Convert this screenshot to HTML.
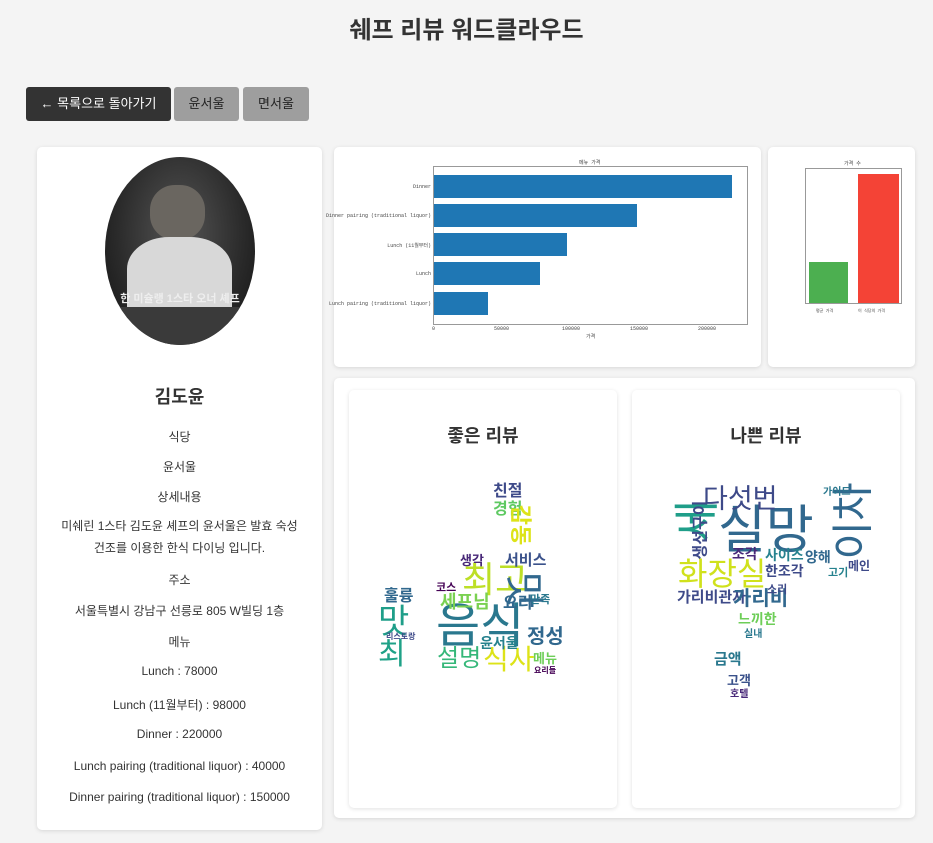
<!DOCTYPE html>
<html><head><meta charset="utf-8">
<style>
*{box-sizing:border-box;margin:0;padding:0}
body{width:933px;height:843px;background:#f4f4f4;font-family:"Liberation Sans","Noto Sans CJK KR",sans-serif;color:#333;position:relative;overflow:hidden}
h1{position:absolute;top:10px;left:0;width:933px;text-align:center;font-size:24px;font-weight:bold;color:#333}
.btn{position:absolute;top:87px;height:34px;line-height:34px;font-size:13px;border-radius:3px;text-align:center}
.card{position:absolute;background:#fff;border-radius:5px;box-shadow:0 1px 4px rgba(0,0,0,.12)}
.info p{position:absolute;left:0;width:285px;text-align:center;font-size:12px;color:#333}
.w{position:absolute;white-space:nowrap;font-weight:bold;line-height:1}
.ax{font-family:"Liberation Mono",monospace;font-size:5px;color:#444;position:absolute;white-space:nowrap}
</style></head><body>
<h1>쉐프 리뷰 워드클라우드</h1>
<div class="btn" style="left:26px;width:145px;background:#333;color:#fff">← 목록으로 돌아가기</div>
<div class="btn" style="left:174px;width:65px;background:#9e9e9e;color:#222">윤서울</div>
<div class="btn" style="left:243px;width:66px;background:#9e9e9e;color:#222">면서울</div>

<div class="card info" style="left:37px;top:147px;width:285px;height:683px">
 <div style="position:absolute;left:68px;top:10px;width:150px;height:188px;border-radius:50%;background:radial-gradient(ellipse at 50% 40%,#555 0%,#2a2a2a 60%,#111 100%);overflow:hidden">
  <div style="position:absolute;left:45px;top:28px;width:55px;height:55px;border-radius:45%;background:#6a6660"></div>
  <div style="position:absolute;left:22px;top:80px;width:105px;height:80px;border-radius:40% 40% 10% 10%;background:#d8d8d8"></div>
  <div style="position:absolute;left:0;top:133px;width:150px;text-align:center;color:#eee;font-size:11px;font-weight:bold">한 미슐랭 1스타 오너 셰프</div>
  <div style="position:absolute;left:0;top:150px;width:150px;height:38px;background:#3a3a3a"></div>
 </div>
 <p style="top:236px;font-size:18px;font-weight:bold">김도윤</p>
 <p style="top:281px">식당</p>
 <p style="top:311px">윤서울</p>
 <p style="top:341px">상세내용</p>
 <p style="top:368px;line-height:22px;padding:0 14px">미쉐린 1스타 김도윤 셰프의 윤서울은 발효 숙성<br>건조를 이용한 한식 다이닝 입니다.</p>
 <p style="top:424px">주소</p>
 <p style="top:455px">서울특별시 강남구 선릉로 805 W빌딩 1층</p>
 <p style="top:486px">메뉴</p>
 <p style="top:517px">Lunch : 78000</p>
 <p style="top:549px">Lunch (11월부터) : 98000</p>
 <p style="top:580px">Dinner : 220000</p>
 <p style="top:612px">Lunch pairing (traditional liquor) : 40000</p>
 <p style="top:643px">Dinner pairing (traditional liquor) : 150000</p>
</div>

<div class="card" style="left:334px;top:147px;width:427px;height:220px">
 <div class="ax" style="left:245px;top:12px">메뉴 가격</div>
 <div style="position:absolute;left:99px;top:19px;width:315px;height:159px;border:1px solid #999">
  <div style="position:absolute;left:0;top:8px;width:298px;height:23px;background:#1f77b4"></div>
  <div style="position:absolute;left:0;top:37px;width:203px;height:23px;background:#1f77b4"></div>
  <div style="position:absolute;left:0;top:66px;width:133px;height:23px;background:#1f77b4"></div>
  <div style="position:absolute;left:0;top:95px;width:106px;height:23px;background:#1f77b4"></div>
  <div style="position:absolute;left:0;top:125px;width:54px;height:23px;background:#1f77b4"></div>
 </div>
 <div class="ax" style="right:330px;top:37px">Dinner</div>
 <div class="ax" style="right:330px;top:66px">Dinner pairing (traditional liquor)</div>
 <div class="ax" style="right:330px;top:95px">Lunch (11월부터)</div>
 <div class="ax" style="right:330px;top:124px">Lunch</div>
 <div class="ax" style="right:330px;top:154px">Lunch pairing (traditional liquor)</div>
 <div class="ax" style="left:98px;top:179px">0</div>
 <div class="ax" style="left:160px;top:179px">50000</div>
 <div class="ax" style="left:228px;top:179px">100000</div>
 <div class="ax" style="left:296px;top:179px">150000</div>
 <div class="ax" style="left:364px;top:179px">200000</div>
 <div class="ax" style="left:252px;top:186px">가격</div>
</div>

<div class="card" style="left:768px;top:147px;width:147px;height:220px">
 <div class="ax" style="left:76px;top:13px">가격 수</div>
 <div style="position:absolute;left:37px;top:21px;width:97px;height:136px;border:1px solid #999">
  <div style="position:absolute;left:3px;bottom:0;width:39px;height:41px;background:#4caf50"></div>
  <div style="position:absolute;left:52px;bottom:0;width:41px;height:129px;background:#f44336"></div>
 </div>
 <div class="ax" style="left:48px;top:161px;font-size:4px">평균 가격</div>
 <div class="ax" style="left:90px;top:161px;font-size:4px">이 식당의 가격</div>
</div>

<div class="card" style="left:334px;top:378px;width:581px;height:440px"></div>
<div class="card" style="left:349px;top:390px;width:268px;height:418px">
 <div style="position:absolute;top:32px;width:268px;text-align:center;font-size:18px;font-weight:bold">좋은 리뷰</div>
</div>
<div class="card" style="left:632px;top:390px;width:268px;height:418px">
 <div style="position:absolute;top:32px;width:268px;text-align:center;font-size:18px;font-weight:bold">나쁜 리뷰</div>
</div>

<!-- good cloud -->
<div class="w" style="left:436px;top:603px;font-size:48px;color:#2a788e;font-weight:normal">음식</div>
<div class="w" style="left:462px;top:562px;font-size:36px;color:#bddf26;font-weight:normal">최고</div>
<div class="w" style="left:505px;top:570px;font-size:40px;color:#31688e;transform:rotate(90deg);font-weight:normal">맛</div>
<div class="w" style="left:483px;top:646px;font-size:28px;color:#dde318;font-weight:normal">식사</div>
<div class="w" style="left:437px;top:647px;font-size:24px;color:#35b779;font-weight:normal">설명</div>
<div class="w" style="left:527px;top:627px;font-size:20px;color:#31688e">정성</div>
<div class="w" style="left:378px;top:605px;font-size:34px;color:#1f9e89;font-weight:normal">맛</div>
<div class="w" style="left:378px;top:640px;font-size:30px;color:#1fa187;font-weight:normal">최</div>
<div class="w" style="left:384px;top:589px;font-size:16px;color:#31688e">훌륭</div>
<div class="w" style="left:493px;top:484px;font-size:16px;color:#3e4a89">친절</div>
<div class="w" style="left:493px;top:502px;font-size:16px;color:#5ec962">경험</div>
<div class="w" style="left:505px;top:553px;font-size:15px;color:#3b528b">서비스</div>
<div class="w" style="left:440px;top:593px;font-size:18px;color:#7ad151">세프님</div>
<div class="w" style="left:503px;top:596px;font-size:16px;color:#31688e">요리</div>
<div class="w" style="left:460px;top:554px;font-size:13px;color:#482878">생각</div>
<div class="w" style="left:480px;top:636px;font-size:14px;color:#26828e">윤서울</div>
<div class="w" style="left:533px;top:652px;font-size:13px;color:#6ece58">메뉴</div>
<div class="w" style="left:436px;top:583px;font-size:11px;color:#440154">코스</div>
<div class="w" style="left:386px;top:633px;font-size:8px;color:#3e4a89">리스토랑</div>
<div class="w" style="left:530px;top:595px;font-size:11px;color:#2a788e">만족</div>
<div class="w" style="left:500px;top:514px;font-size:22px;color:#dde318;transform:rotate(90deg)">감동</div>
<div class="w" style="left:534px;top:667px;font-size:8px;color:#440154">요리들</div>

<!-- bad cloud -->
<div class="w" style="left:718px;top:505px;font-size:52px;color:#31688e;font-weight:normal">실망</div>
<div class="w" style="left:678px;top:558px;font-size:32px;color:#d0e11c;font-weight:normal">화장실</div>
<div class="w" style="left:703px;top:486px;font-size:27px;color:#3e4a89;font-weight:normal">다섯번</div>
<div class="w" style="left:815px;top:500px;font-size:42px;color:#31688e;transform:rotate(-90deg);font-weight:normal">이차</div>
<div class="w" style="left:676px;top:498px;font-size:46px;color:#1f9e89;transform:rotate(-90deg);font-weight:normal">세</div>
<div class="w" style="left:677px;top:590px;font-size:15px;color:#3e4a89">가리비관자</div>
<div class="w" style="left:733px;top:589px;font-size:20px;color:#31688e">가리비</div>
<div class="w" style="left:765px;top:564px;font-size:14px;color:#3e4a89">한조각</div>
<div class="w" style="left:765px;top:548px;font-size:14px;color:#26828e">사이즈</div>
<div class="w" style="left:732px;top:547px;font-size:14px;color:#482878">조각</div>
<div class="w" style="left:805px;top:550px;font-size:14px;color:#31688e">양해</div>
<div class="w" style="left:714px;top:652px;font-size:15px;color:#2a788e">금액</div>
<div class="w" style="left:727px;top:674px;font-size:13px;color:#3b528b">고객</div>
<div class="w" style="left:730px;top:690px;font-size:10px;color:#482878">호텔</div>
<div class="w" style="left:738px;top:612px;font-size:14px;color:#6ece58">느끼한</div>
<div class="w" style="left:823px;top:488px;font-size:10px;color:#2a788e">가이드</div>
<div class="w" style="left:848px;top:560px;font-size:12px;color:#3e4a89">메인</div>
<div class="w" style="left:828px;top:568px;font-size:11px;color:#26828e">고기</div>
<div class="w" style="left:767px;top:585px;font-size:11px;color:#3e4a89">소리</div>
<div class="w" style="left:672px;top:522px;font-size:16px;color:#3e4a89;transform:rotate(-90deg)">생선구이</div>
<div class="w" style="left:744px;top:630px;font-size:10px;color:#2a788e">실내</div>
</body></html>
